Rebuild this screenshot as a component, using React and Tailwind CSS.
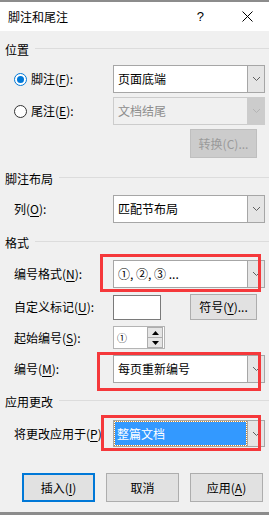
import React from "react";

const FONT = "font-['Noto_Sans_CJK_SC','Liberation_Sans',sans-serif]";

// 带下划线的助记键字母
function K({ children }) {
  return <u className="underline underline-offset-[2px]">{children}</u>;
}

function Chevron({ color = "#606060" }) {
  return (
    <svg width="9" height="6" viewBox="0 0 9 6">
      <path d="M1 1 L4.5 4.5 L8 1" fill="none" stroke={color} strokeWidth="1" />
    </svg>
  );
}

function Combo({ children, disabled, height = "h-[28px]", selected }) {
  return (
    <div
      className={`ml-[113px] w-[152px] ${height} flex border ${
        disabled ? "border-[#cccccc] bg-[#f0f0f0]" : "border-[#a6a6a6] bg-white"
      }`}
    >
      <div className="flex-1 flex items-center px-[1px]">
        {selected ? (
          <div className="flex-1 h-[23px] flex items-center pl-[2px] bg-[#3399ff] text-white outline-1 outline-dotted outline-[#cc8a33]">
            {children}
          </div>
        ) : (
          <span className={`pl-[3px] ${disabled ? "text-[#8d8d8d]" : "text-black"}`}>
            {children}
          </span>
        )}
      </div>
      <div
        className={`w-[17px] flex items-center justify-center border-l ${
          disabled ? "bg-[#cccccc] border-[#cccccc]" : "bg-[#e5e5e5] border-[#a6a6a6]"
        }`}
      >
        <Chevron color={disabled ? "#b4b4b4" : "#606060"} />
      </div>
    </div>
  );
}

function Section({ title, className }) {
  return (
    <div className={`h-[16px] flex items-center pl-[5px] ${className}`}>
      <span className="shrink-0">{title}</span>
      <div className="flex-1 h-px bg-[#dcdcdc] ml-[6px] mb-[4px]" />
    </div>
  );
}

function Btn({ children, className = "", primary, disabled }) {
  return (
    <div
      className={`flex items-center justify-center ${
        primary
          ? "border-2 border-[#0078d7] bg-[#e1e1e1]"
          : disabled
          ? "border border-[#bfbfbf] bg-[#cccccc] text-[#9a9a9a]"
          : "border border-[#adadad] bg-[#e1e1e1]"
      } ${className}`}
    >
      {children}
    </div>
  );
}

export default function App() {
  return (
    <div
      className={`${FONT} relative w-[269px] h-[515px] bg-[#f0f0f0] text-[12px] leading-[16px] text-black flex flex-col overflow-hidden`}
    >
      {/* 窗口上边框 */}
      <div className="h-[2px] bg-[#8c8c8c]" />

      {/* 标题栏 */}
      <div className="h-[29px] bg-white flex items-center pl-[8px]">
        <span>脚注和尾注</span>
        <span className="ml-auto mr-[38px] text-[13px] font-['Liberation_Sans',sans-serif]">?</span>
        <svg width="11" height="11" viewBox="0 0 11 11" className="mr-[16px]">
          <path d="M0.5 0.5 L10.5 10.5 M10.5 0.5 L0.5 10.5" stroke="#000" strokeWidth="1" />
        </svg>
      </div>

      {/* 位置 */}
      <Section title="位置" className="mt-[11px]" />

      <div className="mt-[7px] relative flex items-center">
        <div className="absolute left-[14px] flex items-center">
          <div className="w-[13px] h-[13px] rounded-full border border-[#0078d7] bg-white flex items-center justify-center">
            <div className="w-[7px] h-[7px] rounded-full bg-[#0078d7]" />
          </div>
          <span className="ml-[4px]">
            脚注(<K>F</K>):
          </span>
        </div>
        <Combo>页面底端</Combo>
      </div>

      <div className="mt-[4px] relative flex items-center">
        <div className="absolute left-[14px] flex items-center">
          <div className="w-[13px] h-[13px] rounded-full border border-[#333333] bg-white" />
          <span className="ml-[4px]">
            尾注(<K>E</K>):
          </span>
        </div>
        <Combo disabled>文档结尾</Combo>
      </div>

      <div className="mt-[4px] flex">
        <Btn disabled className="ml-[190px] w-[67px] h-[29px]">
          转换(C)...
        </Btn>
      </div>

      {/* 脚注布局 */}
      <Section title="脚注布局" className="mt-[13px]" />

      <div className="mt-[8px] relative flex items-center">
        <span className="absolute left-[14px]">
          列(<K>O</K>):
        </span>
        <Combo>匹配节布局</Combo>
      </div>

      {/* 格式 */}
      <Section title="格式" className="mt-[12px]" />

      <div className="mt-[9px] relative flex items-center">
        <span className="absolute left-[14px]">
          编号格式(<K>N</K>):
        </span>
        <Combo>①, ②, ③ ...</Combo>
      </div>

      <div className="mt-[6px] h-[26px] flex items-center">
        <span className="w-[113px] pl-[14px]">
          自定义标记(<K>U</K>):
        </span>
        <div className="w-[48px] h-[25px] bg-white border border-[#7a7a7a]" />
        <Btn className="ml-[29px] w-[67px] h-[26px]">
          符号(<K>Y</K>)...
        </Btn>
      </div>

      <div className="mt-[6px] h-[23px] flex items-center">
        <span className="w-[113px] pl-[14px]">
          起始编号(<K>S</K>):
        </span>
        <div className="w-[52px] h-[23px] bg-white border border-[#b4b4b4] flex items-center">
          <span className="flex-1 pl-[3px] text-[10px] leading-[12px]">①</span>
          <div className="w-[16px] h-[21px] flex flex-col mr-[1px]">
            <div className="flex-1 flex items-center justify-center bg-[#e5e5e5] border border-[#adadad]">
              <svg width="7" height="4" viewBox="0 0 7 4">
                <path d="M0 4 L3.5 0 L7 4 Z" fill="#000" />
              </svg>
            </div>
            <div className="flex-1 flex items-center justify-center bg-[#e5e5e5] border border-t-0 border-[#adadad]">
              <svg width="7" height="4" viewBox="0 0 7 4">
                <path d="M0 0 L3.5 4 L7 0 Z" fill="#000" />
              </svg>
            </div>
          </div>
        </div>
      </div>

      <div className="mt-[6px] relative flex items-center">
        <span className="absolute left-[14px]">
          编号(<K>M</K>):
        </span>
        <Combo>每页重新编号</Combo>
      </div>

      {/* 应用更改 */}
      <Section title="应用更改" className="mt-[11px]" />

      <div className="mt-[10px] relative flex items-center">
        <span className="absolute left-[14px]">
          将更改应用于(<K>P</K>)
        </span>
        <Combo height="h-[27px]" selected>
          整篇文档
        </Combo>
      </div>

      {/* 按钮 */}
      <div className="mt-[26px] flex gap-[11px] pl-[22px]">
        <Btn primary className="w-[73px] h-[29px]">
          插入(<K>I</K>)
        </Btn>
        <Btn className="w-[73px] h-[29px]">取消</Btn>
        <Btn className="w-[73px] h-[29px]">
          应用(<K>A</K>)
        </Btn>
      </div>

      <div className="flex-1" />
      <div className="h-[3px] bg-[#8c8c8c]" />

      {/* 红色标注框 */}
      <div className="absolute left-[100px] top-[254px] w-[161px] h-[38px] border-[3px] border-[#f5383b]" />
      <div className="absolute left-[97px] top-[352px] w-[164px] h-[39px] border-[3px] border-[#f5383b]" />
      <div className="absolute left-[101px] top-[415px] w-[160px] h-[36px] border-[3px] border-[#f5383b]" />
    </div>
  );
}
